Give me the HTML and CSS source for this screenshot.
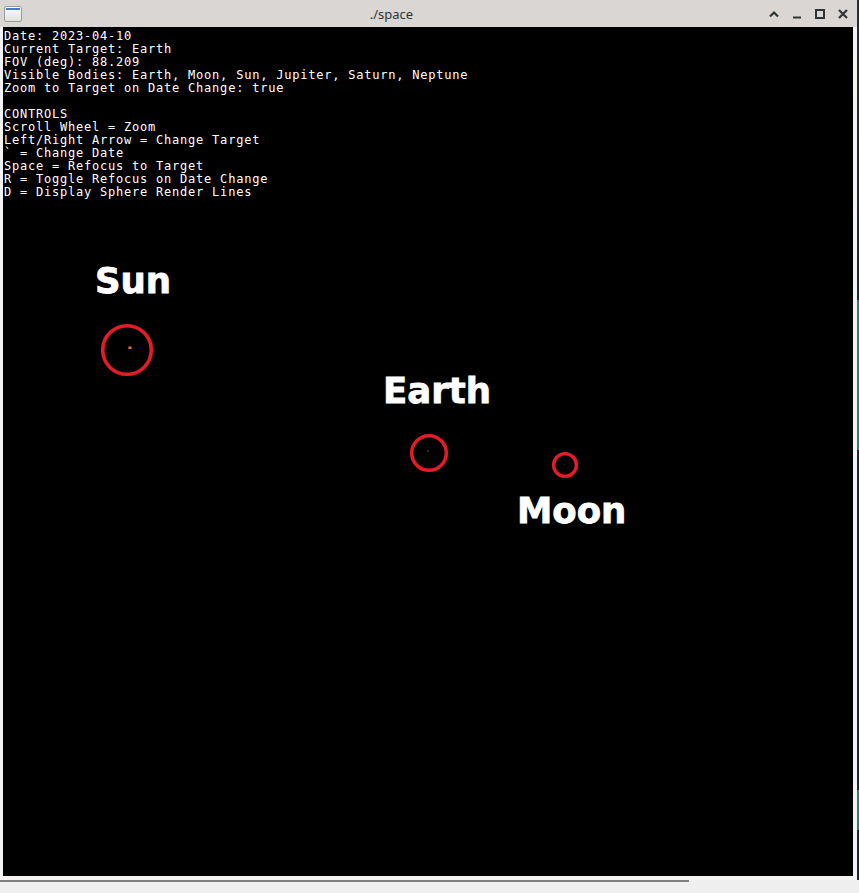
FILE: index.html
```html
<!DOCTYPE html>
<html>
<head>
<meta charset="utf-8">
<link rel="stylesheet" href="styles.css">
</head>
<body>
<div class="screen">
  <div class="row">
    <div class="window">
      <div class="titlebar">
        <div class="app-icon"><div class="app-icon-bar"></div></div>
        <div class="title">./space</div>
        <div class="controls">
          <svg class="ctl" width="10" height="10" viewBox="0 0 10 10"><path d="M1 7.5 L5 3.5 L9 7.5" fill="none" stroke="#2e3436" stroke-width="2.2"/></svg>
          <svg class="ctl" width="10" height="10" viewBox="0 0 10 10"><path d="M1 8.5 H9" fill="none" stroke="#2e3436" stroke-width="2"/></svg>
          <svg class="ctl" width="10" height="10" viewBox="0 0 10 10"><rect x="1" y="1" width="8" height="8" fill="none" stroke="#2e3436" stroke-width="2"/></svg>
          <svg class="ctl" width="10" height="10" viewBox="0 0 10 10"><path d="M1 1 L9 9 M9 1 L1 9" fill="none" stroke="#2e3436" stroke-width="2.2"/></svg>
        </div>
      </div>
      <div class="frame">
        <div class="viewport">
          <pre class="hud">Date: 2023-04-10
Current Target: Earth
FOV (deg): 88.209
Visible Bodies: Earth, Moon, Sun, Jupiter, Saturn, Neptune
Zoom to Target on Date Change: true

CONTROLS
Scroll Wheel = Zoom
Left/Right Arrow = Change Target
` = Change Date
Space = Refocus to Target
R = Toggle Refocus on Date Change
D = Display Sphere Render Lines</pre>
          <svg class="scene" width="850" height="849" viewBox="0 0 850 849">
            <text class="label" x="92" y="266">Sun</text>
            <circle cx="124" cy="323" r="24.3" fill="none" stroke="#e41c27" stroke-width="3.6"/>
            <rect x="125.5" y="319.5" width="3" height="2.5" fill="#e87524"/>
            <text class="label" x="380" y="375.5">Earth</text>
            <circle cx="426" cy="426" r="17.3" fill="none" stroke="#e41c27" stroke-width="3.5"/>
            <rect x="424" y="423" width="2" height="2" fill="#2a2e34"/>
            <text class="label" x="514" y="496">Moon</text>
            <circle cx="562" cy="438" r="11.4" fill="none" stroke="#e41c27" stroke-width="3.4"/>
            <rect x="561" y="437" width="1" height="1" fill="#2a2e34"/>
          </svg>
        </div>
      </div>
    </div>
    <div class="desktop-edge"></div>
  </div>
  <div class="taskline"></div>
</div>
</body>
</html>
```

FILE: styles.css
```css
html, body {
  margin: 0;
  padding: 0;
  background: #efefef;
  width: 859px;
  height: 893px;
  overflow: hidden;
}

.screen {
  display: flex;
  flex-direction: column;
}

.row {
  display: flex;
}

.window {
  width: 857px;
  background: #f4f3f2;
  display: flex;
  flex-direction: column;
}

.titlebar {
  height: 27px;
  background: #dad6d3;
  display: flex;
  align-items: center;
  padding: 0 9px 0 4px;
  box-sizing: border-box;
}

.app-icon {
  width: 18px;
  height: 16px;
  border: 1px solid #9a9a98;
  border-radius: 2px;
  background: linear-gradient(#ffffff, #dfe2de);
  box-sizing: border-box;
  padding: 1px 1px 0;
  margin-top: 1px;
}

.app-icon-bar {
  height: 2px;
  background: #4a7ad0;
}

.title {
  flex: 1;
  text-align: center;
  font-family: "Noto Sans", "DejaVu Sans", sans-serif;
  font-size: 13px;
  color: #2e3436;
  padding-right: 8px;
}

.controls {
  display: flex;
  gap: 13px;
  align-items: center;
}

.ctl {
  display: block;
}

.frame {
  padding: 0 4px 4px 3px;
}

.viewport {
  width: 850px;
  height: 849px;
  background: #000;
  position: relative;
  overflow: hidden;
}

.hud {
  margin: 0;
  padding: 3px 0 0 1px;
  font-family: "DejaVu Sans Mono", monospace;
  font-size: 12px;
  letter-spacing: 0.78px;
  line-height: 13px;
  color: #ffffff;
}

.scene {
  position: absolute;
  left: 0;
  top: 0;
}

.label {
  font-family: "DejaVu Sans", sans-serif;
  font-weight: bold;
  font-size: 35.5px;
  fill: #ffffff;
  stroke: #ffffff;
  stroke-width: 0.8px;
}

.desktop-edge {
  width: 2px;
  background: linear-gradient(#2a2a3a 0, #1c2240 300px, #00908e 300px, #00908e 450px, #1c2240 450px, #1c2240 790px, #00908e 790px, #00908e 830px, #1c2240 830px);
}

.taskline {
  width: 689px;
  height: 2px;
  background: #7e7e7e;
}
```
